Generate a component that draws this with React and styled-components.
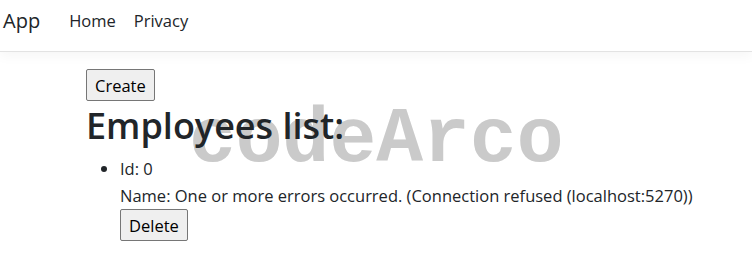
import React from 'react';
import styled, { createGlobalStyle } from 'styled-components';

const GlobalStyle = createGlobalStyle`
    body {
        margin: 0;
        background: #fff;
        font-family: "Open Sans", "Noto Sans", sans-serif;
        color: #212529;
    }
`

const Page = styled.div`
    position: relative;
    width: 752px;
    height: 276px;
    overflow: hidden;
`

const NavBar = styled.nav`
    display: flex;
    align-items: center;
    height: 51px;
    padding-left: 3px;
    border-bottom: 1px solid #e3e3e3;
    box-shadow: 0 4px 12px rgba(0, 0, 0, 0.04);
`

const Brand = styled.a`
    font-size: 20px;
    color: #212529;
    margin-right: 29px;
    margin-top: -10px;
`

const NavLink = styled.a`
    font-size: 16.5px;
    color: #212529;
    margin-right: 18px;
    margin-top: -10px;
`

const Main = styled.main`
    padding: 17px 0 0 86px;
`

const Button = styled.button`
    font-family: inherit;
    font-size: 16.5px;
    color: #000;
    background: #efefef;
    border: 1px solid #767676;
    border-radius: 2px;
    padding: 2px 8px;
    height: 32px;
`

const Title = styled.h1`
    position: relative;
    z-index: 1;
    margin: 3px 0 8px;
    font-size: 36px;
    font-weight: 600;
    line-height: 1.2;
`

const List = styled.ul`
    margin: 2px 0 0;
    padding-left: 34px;
    font-size: 16.5px;
    line-height: 27px;
    position: relative;
    z-index: 1;
`

const Watermark = styled.div`
    position: absolute;
    left: 189px;
    top: 96px;
    font-family: "Liberation Mono", monospace;
    font-weight: 700;
    font-size: 78px;
    color: #cacaca;
    pointer-events: none;
`

const App = () => (
    <Page>
        <GlobalStyle />
        <NavBar>
            <Brand>App</Brand>
            <NavLink>Home</NavLink>
            <NavLink>Privacy</NavLink>
        </NavBar>
        <Main>
            <Button>Create</Button>
            <Title>Employees list:</Title>
            <List>
                <li>
                    <div>Id: 0</div>
                    <div>Name: One or more errors occurred. (Connection refused (localhost:5270))</div>
                    <Button>Delete</Button>
                </li>
            </List>
        </Main>
        <Watermark>codeArco</Watermark>
    </Page>
)

export default App;
